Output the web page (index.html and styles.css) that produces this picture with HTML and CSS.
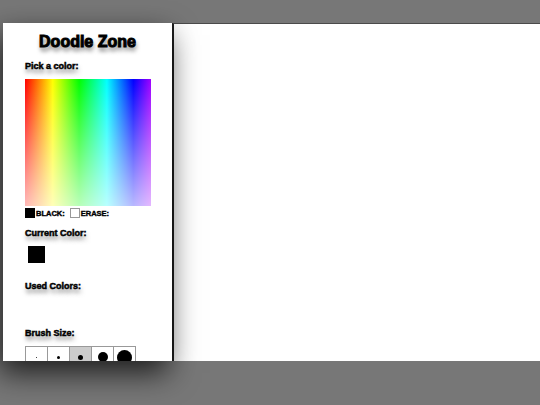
FILE: index.html
```html
<!DOCTYPE html>
<html>
<head>
<meta charset="utf-8">
<link rel="stylesheet" href="styles.css">
</head>
<body>
<div class="app">
  <aside class="sidebar">
    <h1 class="title">Doodle Zone</h1>
    <div class="label label-pick">Pick a color:</div>
    <div class="picker"><div class="picker-fade"></div></div>
    <div class="quick">
      <span class="q-swatch q-black"></span><span class="q-text">BLACK:</span>
      <span class="q-swatch q-erase"></span><span class="q-text">ERASE:</span>
    </div>
    <div class="label label-current">Current Color:</div>
    <div class="current"></div>
    <div class="label label-used">Used Colors:</div>
    <div class="label label-brush">Brush Size:</div>
    <div class="brushes">
      <div class="brush"><span class="dot d1"></span></div>
      <div class="brush"><span class="dot d2"></span></div>
      <div class="brush active"><span class="dot d3"></span></div>
      <div class="brush"><span class="dot d4"></span></div>
      <div class="brush"><span class="dot d5"></span></div>
    </div>
  </aside>
  <main class="canvas"></main>
</div>
</body>
</html>
```
FILE: styles.css
```css
html, body {
  margin: 0;
  padding: 0;
}
body {
  background: #777777;
  width: 540px;
  height: 405px;
  overflow: hidden;
  font-family: "Liberation Sans", Arial, sans-serif;
}
.app {
  display: flex;
  margin: 23px 0 0 3px;
  height: 338px;
}
.sidebar {
  width: 147px;
  padding-left: 22px;
  background: #fff;
  box-shadow: -4px 12px 28px rgba(0, 0, 0, 0.75);
  overflow: hidden;
  position: relative;
  z-index: 1;
}
.canvas {
  flex: 1;
  background: #fff;
  border-left: 2px solid #1e1e1e;
  border-top: 1px solid #4a4a4a;
}
.title {
  margin: 9px 0 0 -22px;
  text-align: center;
  font-size: 16px;
  line-height: 20px;
  font-weight: 700;
  color: #000;
  -webkit-text-stroke: 1px #000;
  text-shadow: 1px 4px 4px rgba(0, 0, 0, 0.55);
}
.label {
  font-size: 9px;
  line-height: 12px;
  font-weight: 700;
  color: #000;
  -webkit-text-stroke: 0.5px #000;
  text-shadow: 1px 4px 4px rgba(0, 0, 0, 0.5);
}
.label-pick { margin-top: 8px; }
.picker {
  margin-top: 7px;
  width: 126px;
  height: 127px;
  position: relative;
  background: linear-gradient(to right, #ff0000 0%, #ffff00 22%, #00ff00 43%, #00ffff 65%, #0000ff 86%, #a000ff 100%);
}
.picker-fade {
  position: absolute;
  inset: 0;
  background: linear-gradient(to bottom, rgba(255,255,255,0) 0%, rgba(255,255,255,0.72) 100%);
}
.quick {
  margin-top: 2px;
  display: flex;
  align-items: center;
  height: 10px;
}
.q-swatch {
  width: 10px;
  height: 10px;
  box-sizing: border-box;
}
.q-black { background: #000; }
.q-erase {
  margin-left: 5px;
  border: 1px solid #999;
  background: #fff;
}
.q-text {
  margin-left: 1px;
  font-size: 7.5px;
  font-weight: 700;
  -webkit-text-stroke: 0.4px #000;
}
.label-current { margin-top: 9px; }
.current {
  margin: 7px 0 0 3px;
  width: 17px;
  height: 17px;
  background: #000;
}
.label-used { margin-top: 17px; }
.label-brush { margin-top: 35px; }
.brushes {
  margin-top: 7px;
  display: flex;
}
.brush {
  width: 21px;
  height: 20px;
  border: 1px solid #999;
  margin-left: -1px;
  display: flex;
  align-items: center;
  justify-content: center;
  background: #fff;
}
.brush:first-child { margin-left: 0; }
.brush.active { background: #cccccc; }
.dot {
  display: block;
  border-radius: 50%;
  background: #000;
}
.d1 { width: 1px; height: 1px; }
.d2 { width: 3px; height: 3px; }
.d3 { width: 5px; height: 5px; }
.d4 { width: 10px; height: 10px; }
.d5 { width: 15px; height: 15px; }
```
